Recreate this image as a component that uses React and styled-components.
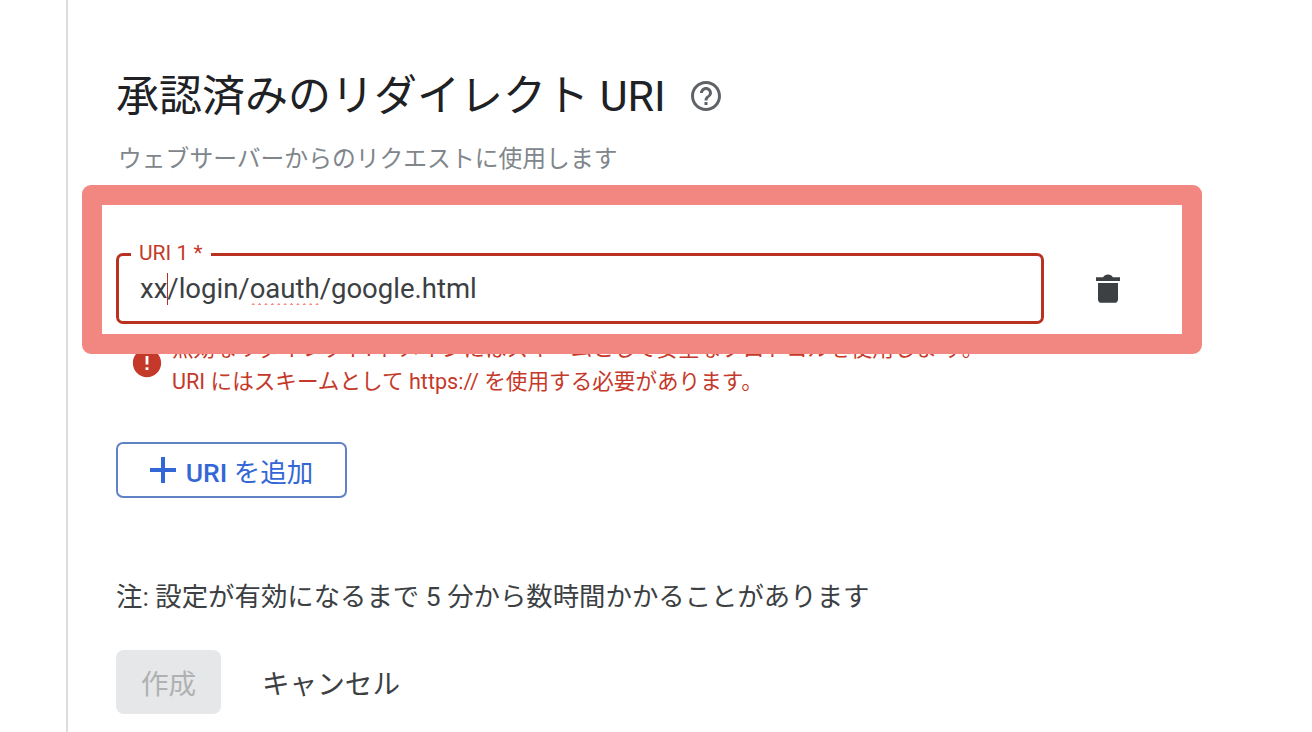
import React from "react";
import styled, { createGlobalStyle } from "styled-components";

const FONT = `Roboto, "Noto Sans CJK JP", sans-serif`;

const Global = createGlobalStyle`
  html, body {
    margin: 0;
    padding: 0;
    height: 100%;
    background: #fff;
    overflow: hidden;
  }
  body {
    font-family: ${FONT};
  }
`;

const Page = styled.div`
  position: relative;
  width: 1312px;
  height: 732px;
  overflow: hidden;
  box-sizing: border-box;
  padding-left: 66px;
`;

const Panel = styled.main`
  height: 100%;
  box-sizing: border-box;
  border-left: 2px solid #dadce0;
  padding: 67px 0 0 48px;
  display: flex;
  flex-direction: column;
  align-items: flex-start;
`;

const TitleRow = styled.div`
  display: flex;
  align-items: center;
  gap: 22px;
  height: 58px;
`;

const Title = styled.h2`
  margin: 0;
  font-size: 43px;
  font-weight: 400;
  line-height: 58px;
  color: #202124;
  white-space: nowrap;
`;

const Help = styled.svg`
  width: 36px;
  height: 36px;
  fill: #5f6368;
  flex: none;
`;

const Hint = styled.p`
  margin: 18px 0 0 2px;
  font-size: 23.8px;
  line-height: 32px;
  color: #80868b;
  white-space: nowrap;
`;

const FieldRow = styled.div`
  margin-top: 78px;
  display: flex;
  align-items: center;
  gap: 52px;
`;

const Field = styled.div`
  position: relative;
  width: 928px;
  height: 71px;
  box-sizing: border-box;
  border: 3.5px solid #b93221;
  border-radius: 7px;
  padding-left: 21px;
  display: flex;
  align-items: center;
`;

const Legend = styled.span`
  position: absolute;
  left: 12px;
  top: -15px;
  padding: 0 8px 0 8px;
  background: #fff;
  font-size: 21px;
  line-height: 24px;
  color: #c5392a;
  white-space: nowrap;
`;

const Value = styled.div`
  font-size: 27.5px;
  line-height: 36px;
  color: #3c4043;
  white-space: nowrap;
`;

const Caret = styled.span`
  display: inline-block;
  width: 0;
  height: 32px;
  margin: 0 -1px 0 0;
  border-left: 1.5px solid #b93221;
  vertical-align: -7px;
`;

const Misspelt = styled.span`
  background-image: radial-gradient(circle, #f28b82 1.1px, transparent 1.4px);
  background-size: 6.4px 3px;
  background-repeat: repeat-x;
  background-position: 0 31px;
`;

const TrashButton = styled.svg`
  width: 24px;
  height: 29px;
  fill: #3c4043;
  flex: none;
`;

const ErrorRow = styled.div`
  margin: 8px 0 0 14px;
  display: flex;
  align-items: flex-start;
  gap: 8px;
`;

const ErrorIcon = styled.svg`
  width: 34px;
  height: 34px;
  fill: #c5392a;
  flex: none;
  margin-top: 14px;
`;

const ErrorText = styled.p`
  margin: 0;
  width: 812px;
  font-size: 21.6px;
  line-height: 33px;
  color: #c5392a;
`;

const AddButton = styled.button`
  margin-top: 44px;
  width: 231px;
  height: 56px;
  box-sizing: border-box;
  background: #fff;
  border: 2px solid #5f82c6;
  border-radius: 7px;
  display: flex;
  align-items: center;
  justify-content: center;
  gap: 10px;
  padding: 0;
  font-family: ${FONT};
  font-size: 26.5px;
  font-weight: 500;
  color: #3367d6;
`;

const AddLabel = styled.span`
  white-space: nowrap;

  span {
    font-weight: 400;
  }
`;

const PlusIcon = styled.svg`
  width: 26px;
  height: 26px;
  fill: #3367d6;
  flex: none;
`;

const Note = styled.p`
  margin: 79px 0 0;
  font-size: 26.4px;
  line-height: 40px;
  color: #3c4043;
  white-space: nowrap;
`;

const Actions = styled.div`
  margin-top: 33px;
  display: flex;
  align-items: center;
  gap: 41px;
`;

const ActionButton = styled.button`
  height: 64px;
  box-sizing: border-box;
  border: none;
  border-radius: 8px;
  padding: 0;
  width: ${(p) => (p.$filled ? "105px" : "auto")};
  background: ${(p) => (p.$filled ? "#e6e7e8" : "transparent")};
  color: ${(p) => (p.$filled ? "#b0b1b3" : "#3c4043")};
  font-family: ${FONT};
  font-size: 27.6px;
  white-space: nowrap;
`;

const HighlightFrame = styled.div`
  position: absolute;
  left: 82px;
  top: 185px;
  width: 1120px;
  height: 169px;
  box-sizing: border-box;
  border: 20px solid #f28782;
  border-radius: 9px;
  pointer-events: none;
`;

export default function App() {
  return (
    <Page>
      <Global />
      <Panel>
        <TitleRow>
          <Title>承認済みのリダイレクト URI</Title>
          <Help viewBox="0 0 24 24">
            <path d="M11 18h2v-2h-2v2zm1-16C6.48 2 2 6.48 2 12s4.48 10 10 10 10-4.48 10-10S17.52 2 12 2zm0 18c-4.41 0-8-3.59-8-8s3.59-8 8-8 8 3.59 8 8-3.59 8-8 8zm0-14c-2.21 0-4 1.79-4 4h2c0-1.1.9-2 2-2s2 .9 2 2c0 2-3 1.75-3 5h2c0-2.25 3-2.5 3-5 0-2.21-1.79-4-4-4z" />
          </Help>
        </TitleRow>
        <Hint>ウェブサーバーからのリクエストに使用します</Hint>
        <FieldRow>
          <Field>
            <Legend>URI 1 *</Legend>
            <Value>
              xx<Caret />/login/<Misspelt>oauth</Misspelt>/google.html
            </Value>
          </Field>
          <TrashButton viewBox="0 0 24 29">
            <path d="M0 3.2h7.2C8 1.2 9.8.4 12 .4s4 .8 4.8 2.8H24v3.8H0zM2 9h20v16.4c0 2-1.4 3.4-3.4 3.4H5.4C3.4 28.8 2 27.4 2 25.4z" />
          </TrashButton>
        </FieldRow>
        <ErrorRow>
          <ErrorIcon viewBox="0 0 24 24">
            <path d="M12 2C6.48 2 2 6.48 2 12s4.48 10 10 10 10-4.48 10-10S17.52 2 12 2zm1 15h-2v-2h2v2zm0-4h-2V7h2v6z" />
          </ErrorIcon>
          <ErrorText>
            無効なリダイレクト: ドメインにはスキームとして安全なプロトコルを使用しま
            す。URI にはスキームとして https:// を使用する必要があります。
          </ErrorText>
        </ErrorRow>
        <AddButton type="button">
          <PlusIcon viewBox="0 0 26 26">
            <path d="M11 0h4v11h11v4H15v11h-4V15H0v-4h11z" />
          </PlusIcon>
          <AddLabel>
            URI <span>を追加</span>
          </AddLabel>
        </AddButton>
        <Note>注: 設定が有効になるまで 5 分から数時間かかることがあります</Note>
        <Actions>
          <ActionButton type="button" $filled>
            作成
          </ActionButton>
          <ActionButton type="button">キャンセル</ActionButton>
        </Actions>
      </Panel>
      <HighlightFrame />
    </Page>
  );
}
